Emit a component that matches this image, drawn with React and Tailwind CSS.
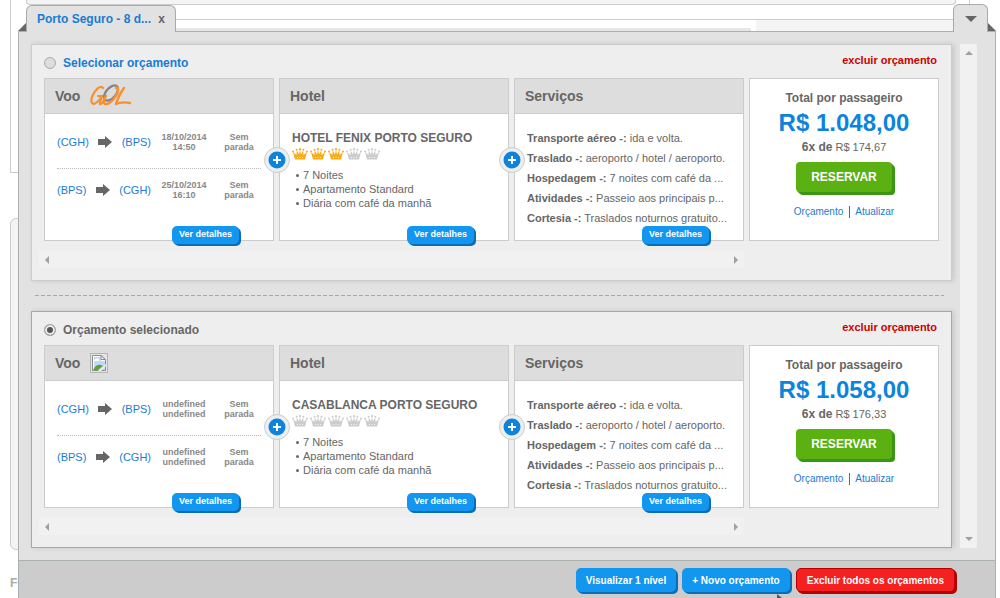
import { useState } from 'react'

const services = [
  { label: 'Transporte aéreo -:', text: 'ida e volta.' },
  { label: 'Traslado -:', text: 'aeroporto / hotel / aeroporto.' },
  { label: 'Hospedagem -:', text: '7 noites com café da ...' },
  { label: 'Atividades -:', text: 'Passeio aos principais p...' },
  { label: 'Cortesia -:', text: 'Traslados noturnos gratuito...' }
]

const amenities = ['7 Noites', 'Apartamento Standard', 'Diária com café da manhã']

const quotes = [
  {
    id: 1,
    airline: 'gol',
    flights: [
      { from: 'CGH', to: 'BPS', date: '18/10/2014', time: '14:50' },
      { from: 'BPS', to: 'CGH', date: '25/10/2014', time: '16:10' }
    ],
    hotel: 'HOTEL FENIX PORTO SEGURO',
    rating: 3,
    total: '1.048,00',
    installment: '174,67'
  },
  {
    id: 2,
    airline: null,
    flights: [
      { from: 'CGH', to: 'BPS', date: 'undefined', time: 'undefined' },
      { from: 'BPS', to: 'CGH', date: 'undefined', time: 'undefined' }
    ],
    hotel: 'CASABLANCA PORTO SEGURO',
    rating: 0,
    total: '1.058,00',
    installment: '176,33'
  }
]

function GolLogo() {
  return (
    <svg width="42" height="24" viewBox="0 0 42 24" fill="none" strokeLinecap="round" strokeLinejoin="round" role="img" aria-label="Gol">
      <ellipse cx="21" cy="9" rx="9" ry="5" transform="rotate(-50 21 9)" stroke="#85868a" strokeWidth="2.4" />
      <path d="M13 4C12 2 9 3 7 5C3 9 0 16 2 19C4 22 9 17 12 12H8" stroke="#f98f2e" strokeWidth="2.2" />
      <path d="M12 12C11 16 9 19 10 20C11 21 14 17 15 14" stroke="#f98f2e" strokeWidth="2.2" />
      <path d="M16 12C13 16 13 21 17 20C22 19 28 10 28 6C28 4 27 3 26 4" stroke="#f98f2e" strokeWidth="2.4" />
      <path d="M34 4C31 8 28 14 26 20C30 18 35 18 40 19" stroke="#f98f2e" strokeWidth="2.4" />
    </svg>
  )
}

function MissingImage() {
  return (
    <svg width="18" height="20" viewBox="0 0 18 20" role="img" aria-label="Companhia aérea">
      <rect x="0.5" y="0.5" width="17" height="19" fill="#e4e4e4" stroke="#b5b5b5" />
      <path d="M2.5 2.5h9l4 4v11h-13z" fill="#fff" stroke="#8d8d8d" />
      <path d="M4 4h7v4h4v9H4z" fill="#c5d9f5" />
      <path d="M4 8q0-2 2-2q2-2 3 1q1 1 0 1z" fill="#fff" />
      <path d="M3 17q3-6 8-5l2 1l-5 4z" fill="#52a83a" />
      <path d="M8 18l8-7v2l-5 5z" fill="#ececec" />
      <path d="M11 2.5v4h4z" fill="#fff" stroke="#8d8d8d" />
    </svg>
  )
}

function Crown({ active }) {
  return (
    <svg width="16" height="12" viewBox="0 0 16 12" className={active ? 'fill-[#fbab18]' : 'fill-[#cccccc]'}>
      <path d="M3 11.5L1 4L4.4 7L4.8 2.5L7 6.5L8 1.5L9 6.5L11.2 2.5L11.6 7L15 4L13 11.5z" />
      <circle cx="1" cy="3.4" r="1" />
      <circle cx="4.6" cy="1.8" r="1" />
      <circle cx="8" cy="1.2" r="1.1" />
      <circle cx="11.4" cy="1.8" r="1" />
      <circle cx="15" cy="3.4" r="1" />
      <path d="M5 9.5h1M7.5 9.5h1M10 9.5h1" stroke="#fff" strokeWidth="0.8" />
    </svg>
  )
}

function FlightArrow() {
  return (
    <svg width="14" height="12" viewBox="0 0 14 12" className="fill-[#666666]">
      <path d="M0 3h7V0l7 6l-7 6V9H0z" />
    </svg>
  )
}

function Column({ title, extra, joined, children }) {
  return (
    <section className="relative min-w-0 flex-1 border border-[#cccccc] bg-white">
      <header className="flex h-[35px] items-center gap-[10px] border-b border-[#cccccc] bg-[#dddddd] px-[10px]">
        <h2 className="text-sm font-bold">{title}</h2>
        {extra}
      </header>
      {children}
      {joined && (
        <button
          type="button"
          aria-label="Adicionar"
          className="absolute -left-4 top-[68px] z-10 flex size-[26px] items-center justify-center rounded-full border border-[#cccccc] bg-[#eeeeee]"
        >
          <svg width="18" height="18" viewBox="0 0 18 18">
            <circle cx="9" cy="9" r="8.5" fill="#0e83dc" />
            <path d="M5 9h8M9 5v8" stroke="#fff" strokeWidth="2" />
          </svg>
        </button>
      )}
      <button
        type="button"
        className="absolute -bottom-1 right-[34px] h-[18px] w-[67px] rounded-[5px] bg-[#1296ef] text-[9px] font-bold text-white shadow-[1px_1px_0_#0b6db5,2px_2px_0_#0b6db5]"
      >
        Ver detalhes
      </button>
    </section>
  )
}

function Flight({ flight }) {
  return (
    <div className="flex h-[42px] items-center text-center">
      <div className="flex w-[94px] items-center justify-between text-[11px] text-[#1a7bd4]">
        <a href="#origem">({flight.from})</a>
        <FlightArrow />
        <a href="#destino">({flight.to})</a>
      </div>
      <p className="w-[66px] text-[9px] leading-[10px] font-bold text-[#888888]">
        {flight.date}
        <br />
        {flight.time}
      </p>
      <p className="flex-1 text-[9px] leading-[10px] font-bold text-[#888888]">
        Sem
        <br />
        parada
      </p>
    </div>
  )
}

function Quote({ quote, selected, onSelect }) {
  return (
    <article
      className={`border bg-[#eeeeee] px-3 pb-3 shadow-[2px_0_5px_rgba(0,0,0,0.12)] ${
        selected ? 'border-[#7ab3dc]' : 'border-[#cccccc]'
      }`}
    >
      <div className="flex h-[33px] items-center justify-between">
        <label
          className={`flex items-center gap-[7px] pt-[2px] text-xs font-bold ${selected ? 'text-[#666666]' : 'text-[#1a7bd4]'}`}
        >
          <input
            type="radio"
            name="orcamento"
            checked={selected}
            onChange={onSelect}
            className="size-3 appearance-none rounded-full border border-[#aaaaaa] bg-[#dddddd] checked:bg-[#555555] checked:shadow-[inset_0_0_0_2px_#eeeeee]"
          />
          {selected ? 'Orçamento selecionado' : 'Selecionar orçamento'}
        </label>
        <button type="button" className="mr-[2px] pb-[2px] text-[11px] font-bold text-[#cc0000]">
          excluir orçamento
        </button>
      </div>

      <div className="flex h-[163px] gap-[5px]">
        <Column title="Voo" extra={quote.airline === 'gol' ? <GolLogo /> : <MissingImage />}>
          <div className="px-3 pt-[7px]">
            <Flight flight={quote.flights[0]} />
            <div className="mt-[5px] border-t border-dotted border-[#bbbbbb]" />
            <Flight flight={quote.flights[1]} />
          </div>
        </Column>

        <Column title="Hotel" joined>
          <div className="px-3 pt-4 text-[11px]">
            <h3 className="text-xs leading-4 font-bold">{quote.hotel}</h3>
            <div className="flex gap-[2px] pt-[2px]">
              {[1, 2, 3, 4, 5].map((n) => (
                <Crown key={n} active={n <= quote.rating} />
              ))}
            </div>
            <ul className="pt-2 pl-1 leading-[14px]">
              {amenities.map((item) => (
                <li key={item} className="flex items-center gap-1 before:size-[3px] before:rounded-full before:bg-[#666666]">
                  {item}
                </li>
              ))}
            </ul>
          </div>
        </Column>

        <Column title="Serviços" joined>
          <ul className="px-3 pt-[14px] text-[11px] leading-5">
            {services.map((service) => (
              <li key={service.label} className="whitespace-nowrap">
                <b>{service.label}</b> {service.text}
              </li>
            ))}
          </ul>
        </Column>

        <section className="flex w-[190px] flex-col items-center border border-[#cccccc] bg-white pt-[11px]">
          <h3 className="text-xs leading-4 font-bold">Total por passageiro</h3>
          <p className="text-2xl leading-[34px] font-bold text-[#0e83dc]">R$ {quote.total}</p>
          <p className="text-[11px] leading-[14px]">
            <b className="text-xs leading-[14px]">6x de</b> R$ {quote.installment}
          </p>
          <button
            type="button"
            className="mt-2 h-[30px] w-24 rounded-[4px] bg-[#5bb012] text-xs font-bold text-white shadow-[1px_1px_0_#3a9614,2px_2px_0_#3a9614,3px_3px_0_#3a9614]"
          >
            RESERVAR
          </button>
          <p className="mt-[14px] flex items-center text-[10px] leading-3 text-[#1a7bd4]">
            <a href="#orcamento" className="border-r border-[#1a7bd4] pr-[6px]">Orçamento</a>
            <a href="#atualizar" className="pl-[5px]">Atualizar</a>
          </p>
        </section>
      </div>

      <div className="-ml-[5px] mr-[195px] mt-[10px] flex h-[17px] items-center justify-between bg-[#f1f1f1] px-[6px]">
        <svg width="4" height="8" viewBox="0 0 4 8" className="fill-[#a0a0a0]">
          <path d="M4 0v8L0 4z" />
        </svg>
        <svg width="4" height="8" viewBox="0 0 4 8" className="fill-[#a0a0a0]">
          <path d="M0 0v8l4-4z" />
        </svg>
      </div>
    </article>
  )
}

function PageBehind() {
  return (
    <div className="absolute inset-0 -z-10 flex flex-col overflow-hidden bg-white pr-[30px] pl-[10px] text-[#aaaaaa]">
      <div className="h-[173px] border-x border-b border-[#cccccc] pr-[13px] pl-[15px]">
        <div className="h-[5px] rounded-b border border-t-0 border-[#cccccc] bg-[#f4f4f4]" />
        <div className="mt-[14px] h-10 border-t border-[#cccccc] bg-[#f4f4f4]">
          <div className="w-[730px] bg-white pt-2">
            <div className="h-3 w-[725px] bg-[#e6e6e6]" />
          </div>
        </div>
      </div>
      <div className="mt-[45px] h-[332px] rounded-md border border-[#cccccc] bg-[#f4f4f4]" />
      <p className="mt-[25px] text-xs font-bold">FORMAS</p>
    </div>
  )
}

export default function App() {
  const [selected, setSelected] = useState(2)

  return (
    <div className="relative isolate flex min-h-screen flex-col overflow-hidden pt-1 pr-1 pl-[18px] font-['Liberation_Sans',Arial,sans-serif] text-[#666666]">
      <PageBehind />

      <div className="z-10 -mb-px flex items-end justify-between">
        <div className="flex items-end">
          <svg width="8" height="9" viewBox="0 0 8 9" className="fill-[#666666]">
            <path d="M8 0v8H0z" />
          </svg>
          <div className="flex h-[27px] w-[150px] items-center justify-between rounded-t-md border border-b-0 border-[#aaaaaa] bg-[#e2e2e2] px-[10px]">
            <a href="#porto-seguro" className="text-xs font-bold text-[#1a7bd4]">Porto Seguro - 8 d...</a>
            <button type="button" aria-label="Fechar" className="text-xs font-bold">x</button>
          </div>
        </div>
        <div className="flex items-end">
          <button
            type="button"
            aria-label="Minimizar"
            className="flex h-7 w-[35px] items-center justify-center rounded-t-md border border-b-0 border-[#aaaaaa] bg-[#e2e2e2]"
          >
            <svg width="12" height="6" viewBox="0 0 12 6" className="fill-[#666666]">
              <path d="M0 0h12L6 6z" />
            </svg>
          </button>
          <svg width="8" height="9" viewBox="0 0 8 9" className="fill-[#666666]">
            <path d="M0 0v8h8z" />
          </svg>
        </div>
      </div>

      <div className="flex flex-1 flex-col border-x border-t border-[#aab0b0] bg-[#e2e2e2]">
        <main className="flex gap-2 py-3 pr-[18px] pl-3">
          <div className="min-w-0 flex-1">
            <Quote quote={quotes[0]} selected={selected === 1} onSelect={() => setSelected(1)} />
            <div className="pt-[14px] pr-2 pb-[15px] pl-1">
              <svg width="100%" height="1" className="block">
                <line x1="0" y1="0.5" x2="100%" y2="0.5" stroke="#a8a8a8" strokeDasharray="4 2" />
              </svg>
            </div>
            <Quote quote={quotes[1]} selected={selected === 2} onSelect={() => setSelected(2)} />
          </div>
          <div className="flex w-[17px] flex-col items-center justify-between bg-[#f1f1f1] py-[7px]">
            <svg width="8" height="4" viewBox="0 0 8 4" className="fill-[#a0a0a0]">
              <path d="M0 4h8L4 0z" />
            </svg>
            <svg width="8" height="4" viewBox="0 0 8 4" className="fill-[#a0a0a0]">
              <path d="M0 0h8L4 4z" />
            </svg>
          </div>
        </main>

        <footer className="flex flex-1 items-start justify-end gap-[6px] border-t border-[#aab0b0] bg-[#cccccc] pt-[7px] pr-10 text-[10px] font-bold text-white">
          <button type="button" className="h-6 rounded-[5px] bg-[#1296ef] px-[10px] shadow-[1px_1px_0_#0b6db5,2px_2px_0_#0b6db5]">
            Visualizar 1 nível
          </button>
          <button type="button" className="relative h-6 rounded-[5px] bg-[#1296ef] px-[10px] shadow-[1px_1px_0_#0b6db5,2px_2px_0_#0b6db5]">
            + Novo orçamento
            <svg width="5" height="4" viewBox="0 0 5 4" className="absolute top-[26px] right-2 fill-[#555555]">
              <path d="M0 0l5 4H0z" />
            </svg>
          </button>
          <button type="button" className="h-6 rounded-[5px] border border-[#b50000] bg-[#f52020] px-[10px] shadow-[1px_1px_0_#b50000,2px_2px_0_#b50000]">
            Excluir todos os orçamentos
          </button>
        </footer>
      </div>
    </div>
  )
}
